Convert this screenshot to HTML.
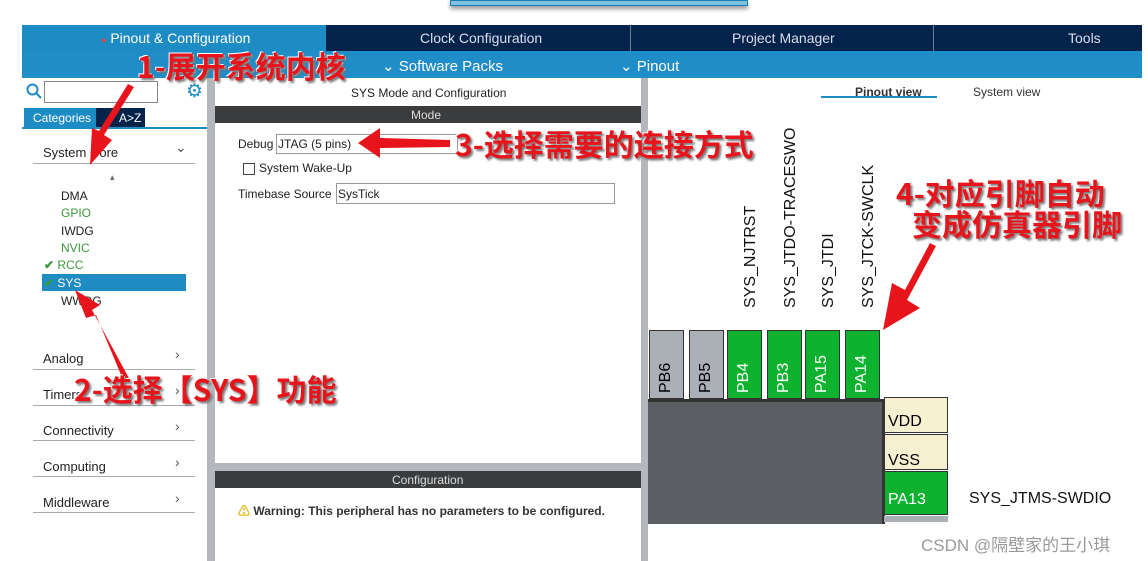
<!DOCTYPE html><html><head><meta charset="utf-8"><style>
body{margin:0;width:1148px;height:561px;background:#fff;position:relative;overflow:hidden;font-family:"Liberation Sans","Noto Sans CJK SC",sans-serif}
.a{position:absolute}
.t{font-size:12px;color:#222;white-space:nowrap}
.v{position:absolute;transform:rotate(-90deg);transform-origin:left top;white-space:nowrap;font-size:16px;color:#111}
.ann{position:absolute;color:#e8141c;font-weight:bold;font-size:30px;white-space:nowrap;text-shadow:2px 2px 2px #777,-1px -1px 0 #fff,1px 1px 0 #fff;font-family:"Noto Sans CJK SC","Liberation Sans",sans-serif;line-height:1}
.pin{position:absolute;top:330px;width:35px;height:69px;border:1px solid #333;box-sizing:border-box}
.pin span{position:absolute;left:7px;bottom:6px;transform:rotate(-90deg);transform-origin:left top;font-size:16px;top:62px;white-space:nowrap}
.line{position:absolute;left:33px;width:162px;height:1px;background:#aaa}
.chev{position:absolute;left:175px;font-size:14px;color:#555}
</style></head><body>
<div class="a" style="left:450px;top:0;width:296px;height:4px;background:#7fbfe0;border:1px solid #1a7fb0;box-shadow:0 3px 4px #999"></div>
<div class="a" style="left:22px;top:25px;width:1120px;height:26px;background:#03234b"></div>
<div class="a" style="left:22px;top:25px;width:304px;height:26px;background:#1d8cc4"></div>
<div class="a" style="left:630px;top:25px;width:1px;height:26px;background:#6a7f99"></div>
<div class="a" style="left:933px;top:25px;width:1px;height:26px;background:#6a7f99"></div>
<div class="a t" style="left:101px;top:30px;color:#fff;font-size:14px"><span style="color:#e44;font-size:9px">●</span> Pinout &amp; Configuration</div>
<div class="a t" style="left:420px;top:30px;color:#dde;font-size:14px">Clock Configuration</div>
<div class="a t" style="left:732px;top:30px;color:#dde;font-size:14px">Project Manager</div>
<div class="a t" style="left:1068px;top:30px;color:#dde;font-size:14px">Tools</div>
<div class="a" style="left:22px;top:51px;width:1120px;height:27px;background:#1f8dc8"></div>
<div class="a t" style="left:382px;top:57px;color:#fff;font-size:15px">⌄ Software Packs</div>
<div class="a t" style="left:620px;top:57px;color:#fff;font-size:15px">⌄ Pinout</div>
<div class="a" style="left:207px;top:78px;width:8px;height:483px;background:#b4b8bc"></div>
<div class="a" style="left:641px;top:78px;width:7px;height:483px;background:#b4b8bc"></div>
<svg class="a" style="left:26px;top:83px" width="16" height="16"><circle cx="6.5" cy="6.5" r="5" fill="none" stroke="#1d8cc4" stroke-width="2"/><line x1="10" y1="10" x2="15" y2="15" stroke="#1d8cc4" stroke-width="2"/></svg>
<div class="a" style="left:44px;top:81px;width:112px;height:20px;border:1px solid #888"></div>
<div class="a" style="left:186px;top:80px;color:#1d8cc4;font-size:19px">⚙</div>
<div class="a" style="left:24px;top:108px;width:72px;height:19px;background:#1d8cc4"></div>
<div class="a" style="left:96px;top:108px;width:49px;height:19px;background:#03234b"></div>
<div class="a t" style="left:33px;top:111px;color:#fff">Categories</div>
<div class="a t" style="left:119px;top:111px;color:#fff">A&gt;Z</div>
<div class="a" style="left:22px;top:127px;width:185px;height:2px;background:#1d8cc4"></div>
<div class="a t" style="left:43px;top:145px;font-size:13px">System Core</div><div class="chev" style="top:139px">⌄</div>
<div class="line" style="top:163px"></div>
<div class="a t" style="left:110px;top:172px;font-size:9px;color:#666">▴</div>
<div class="a t" style="left:61px;top:189px">DMA</div>
<div class="a t" style="left:61px;top:206px;color:#3a9a3a">GPIO</div>
<div class="a t" style="left:61px;top:224px">IWDG</div>
<div class="a t" style="left:61px;top:241px;color:#3a9a3a">NVIC</div>
<div class="a t" style="left:44px;top:258px;color:#3a9a3a"><b>✔</b> RCC</div>
<div class="a" style="left:42px;top:274px;width:144px;height:17px;background:#1e8bc3"></div>
<div class="a t" style="left:44px;top:276px;color:#fff"><b style="color:#3a9a3a">✔</b> SYS</div>
<div class="a t" style="left:61px;top:294px">WWDG</div>
<div class="a t" style="left:43px;top:351px;font-size:13px">Analog</div><div class="chev" style="top:346px">›</div><div class="line" style="top:369px"></div>
<div class="a t" style="left:43px;top:387px;font-size:13px">Timers</div><div class="chev" style="top:382px">›</div><div class="line" style="top:405px"></div>
<div class="a t" style="left:43px;top:423px;font-size:13px">Connectivity</div><div class="chev" style="top:418px">›</div><div class="line" style="top:440px"></div>
<div class="a t" style="left:43px;top:459px;font-size:13px">Computing</div><div class="chev" style="top:454px">›</div><div class="line" style="top:476px"></div>
<div class="a t" style="left:43px;top:495px;font-size:13px">Middleware</div><div class="chev" style="top:490px">›</div><div class="line" style="top:512px"></div>
<div class="a t" style="left:351px;top:86px">SYS Mode and Configuration</div>
<div class="a" style="left:215px;top:106px;width:426px;height:17px;background:#3a3c3e"></div>
<div class="a t" style="left:411px;top:108px;color:#ddd">Mode</div>
<div class="a t" style="left:238px;top:137px">Debug</div>
<div class="a" style="left:276px;top:134px;width:180px;height:18px;border:1px solid #999"></div>
<div class="a t" style="left:278px;top:137px">JTAG (5 pins)</div>
<div class="a" style="left:243px;top:163px;width:10px;height:10px;border:1px solid #444"></div>
<div class="a t" style="left:259px;top:161px">System Wake-Up</div>
<div class="a t" style="left:238px;top:187px">Timebase Source</div>
<div class="a" style="left:336px;top:183px;width:277px;height:19px;border:1px solid #999"></div>
<div class="a t" style="left:338px;top:187px">SysTick</div>
<div class="a" style="left:215px;top:463px;width:426px;height:8px;background:#b4b8bc"></div>
<div class="a" style="left:215px;top:471px;width:426px;height:17px;background:#3a3c3e"></div>
<div class="a t" style="left:392px;top:473px;color:#ddd">Configuration</div>
<div class="a t" style="left:238px;top:502px;font-weight:bold;color:#333"><span style="color:#e5b000">⚠</span> Warning: This peripheral has no parameters to be configured.</div>
<div class="a t" style="left:855px;top:85px;font-weight:bold;color:#333">Pinout view</div>
<div class="a" style="left:821px;top:96px;width:116px;height:2px;background:#1d8cc4"></div>
<div class="a t" style="left:973px;top:85px;color:#333">System view</div>
<div class="v" style="left:742px;top:308px">SYS_NJTRST</div>
<div class="v" style="left:782px;top:308px">SYS_JTDO-TRACESWO</div>
<div class="v" style="left:820px;top:308px">SYS_JTDI</div>
<div class="v" style="left:860px;top:308px">SYS_JTCK-SWCLK</div>
<div class="pin" style="left:649px;background:#aab0b6"><span>PB6</span></div>
<div class="pin" style="left:689px;background:#aab0b6"><span>PB5</span></div>
<div class="pin" style="left:727px;background:#0fb22e;color:#fff"><span>PB4</span></div>
<div class="pin" style="left:767px;background:#0fb22e;color:#fff"><span>PB3</span></div>
<div class="pin" style="left:805px;background:#0fb22e;color:#fff"><span>PA15</span></div>
<div class="pin" style="left:845px;background:#0fb22e;color:#fff"><span>PA14</span></div>
<div class="a" style="left:648px;top:399px;width:234px;height:122px;background:#5b5f63;border-top:3px solid #333;border-right:3px solid #333"></div>
<div class="a" style="left:884px;top:397px;width:64px;height:36px;background:#f7f0d0;border:1px solid #333;box-sizing:border-box"><span class="a" style="left:3px;top:15px;font-size:16px">VDD</span></div>
<div class="a" style="left:884px;top:434px;width:64px;height:36px;background:#f7f0d0;border:1px solid #333;box-sizing:border-box"><span class="a" style="left:3px;top:17px;font-size:16px">VSS</span></div>
<div class="a" style="left:884px;top:471px;width:64px;height:44px;background:#0fb22e;border:1px solid #333;box-sizing:border-box"><span class="a" style="left:3px;top:19px;font-size:16px;color:#fff">PA13</span></div>
<div class="a" style="left:884px;top:516px;width:64px;height:6px;background:#aab0b6"></div>
<div class="a" style="left:969px;top:490px;font-size:16px;color:#111">SYS_JTMS-SWDIO</div>
<div class="a" style="left:921px;top:531px;font-size:17px;color:#999">CSDN @隔壁家的王小琪</div>
<svg class="a" style="left:0;top:0" width="1148" height="561">
<g fill="#e8141c">
<polygon points="128,84 134,87 104,135 112,140 90,165 92,128 99,131"/>
<polygon points="358,143 380,128 380,138 450,140 450,147 380,148 380,158"/>
<polygon points="130,380 124,382 96,315 86,318 75,290 100,305 92,310"/>
<polygon points="936,246 930,243 905,290 892,283 883,330 920,308 907,300"/>
</g></svg>
<div class="ann" style="left:137px;top:50px">1-展开系统内核</div>
<div class="ann" style="left:455px;top:128px">3-选择需要的连接方式</div>
<div class="ann" style="left:74px;top:373px">2-选择【SYS】功能</div>
<div class="ann" style="left:896px;top:177px">4-对应引脚自动</div>
<div class="ann" style="left:912px;top:208px">变成仿真器引脚</div>
</body></html>
